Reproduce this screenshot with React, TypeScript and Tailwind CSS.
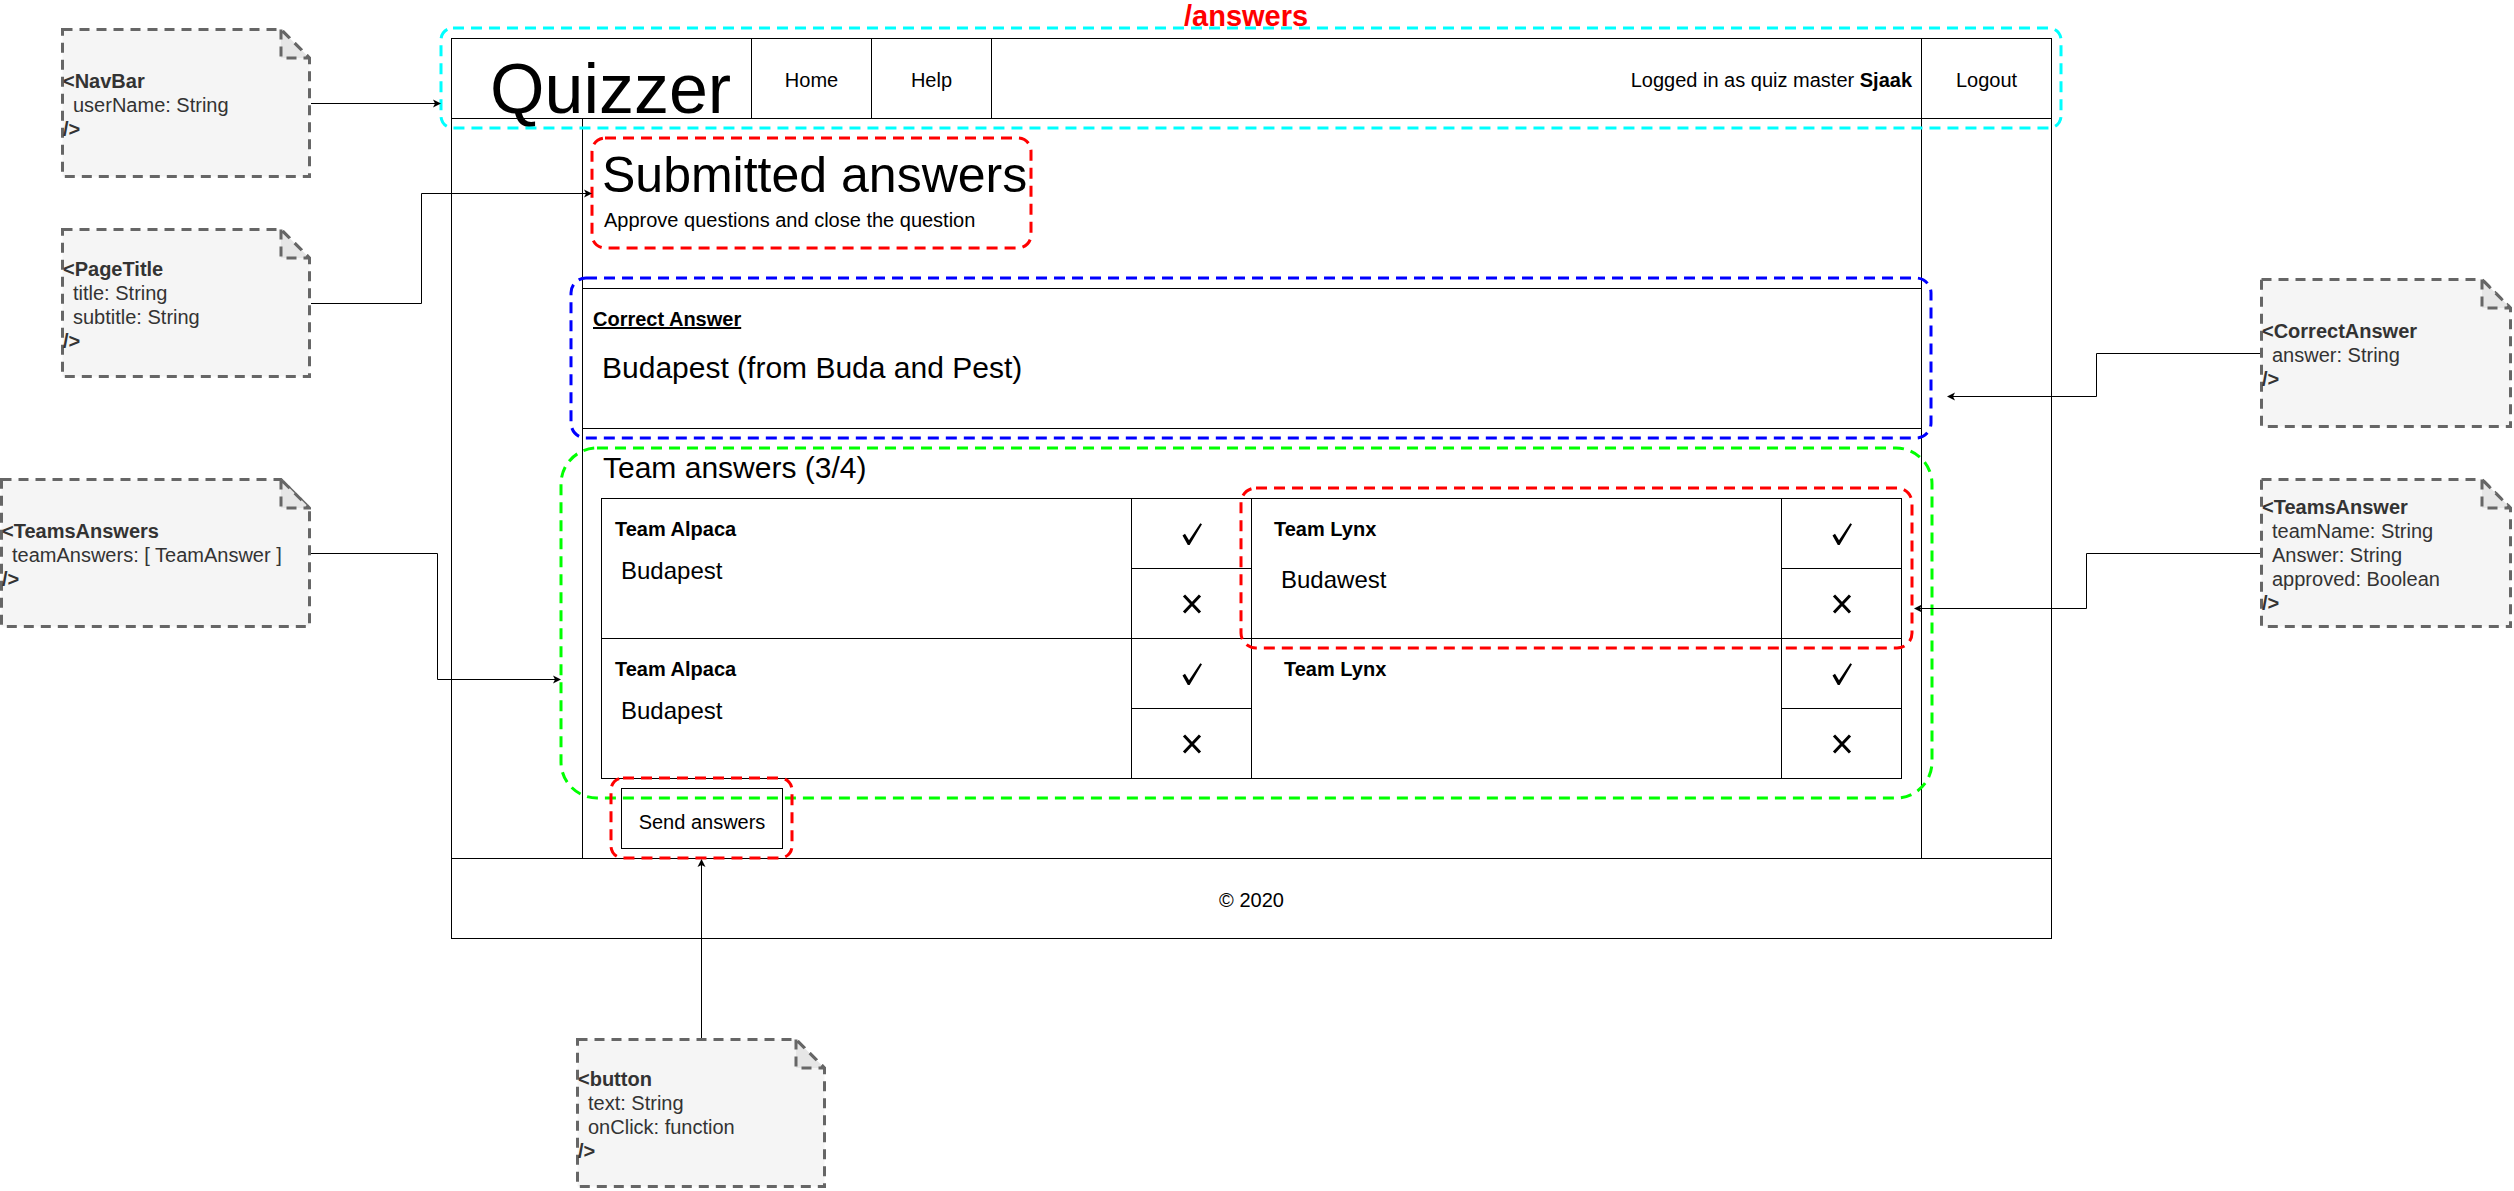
import React from "react";

type Line = { t: string; b?: boolean };

function Note({ pos, w, lines }: { pos: string; w: number; lines: Line[] }) {
  const h = 150;
  return (
    <div className={`absolute ${pos} h-[150px] flex flex-col justify-center pt-[3px]`}>
      <svg className="absolute inset-0" width={w} height={h}>
        <polygon
          points={`1.5,1.5 ${w - 30},1.5 ${w - 1.5},30 ${w - 1.5},${h - 1.5} 1.5,${h - 1.5}`}
          fill="#f5f5f5"
          stroke="#666666"
          strokeWidth={3}
          strokeDasharray="10 7"
        />
        <path
          d={`M${w - 30} 1.5 L${w - 30} 30 L${w - 1.5} 30 Z`}
          fill="#e6e6e6"
          stroke="#666666"
          strokeWidth={3}
          strokeDasharray="10 7"
        />
      </svg>
      <div className="relative flex flex-col text-[20px] leading-[24px] text-[#333333]">
        {lines.map((l, i) => (
          <div key={i} className={l.b ? "pl-[2px] font-bold" : "pl-[12px]"}>
            {l.t}
          </div>
        ))}
      </div>
    </div>
  );
}

function Check() {
  return (
    <svg width="20" height="22" viewBox="0 0 20 22">
      <path d="M0.5 12.5 L3 10.8 L7 17.3 L18.3 0.3 L20 1.3 L7.6 22 L5.8 22 Z" fill="#000" />
    </svg>
  );
}

function Cross() {
  return (
    <svg width="20" height="20" viewBox="0 0 20 20">
      <path d="M2 1.5 L18 18.5 M18 1.5 L2 18.5" stroke="#000" strokeWidth={3} />
    </svg>
  );
}

function Votes({ cls }: { cls: string }) {
  return (
    <div className={`flex flex-col ${cls}`}>
      <div className="h-[70px] shrink-0 border-b border-black flex items-center justify-center">
        <Check />
      </div>
      <div className="flex-1 flex items-center justify-center">
        <Cross />
      </div>
    </div>
  );
}

function head(tx: number, ty: number, d: "r" | "l" | "u") {
  if (d === "r") return `${tx},${ty} ${tx - 8},${ty - 4} ${tx - 6},${ty} ${tx - 8},${ty + 4}`;
  if (d === "l") return `${tx},${ty} ${tx + 8},${ty - 4} ${tx + 6},${ty} ${tx + 8},${ty + 4}`;
  return `${tx},${ty} ${tx - 4},${ty + 8} ${tx},${ty + 6} ${tx + 4},${ty + 8}`;
}

export default function App() {
  return (
    <div className="relative w-[2514px] h-[1191px] overflow-hidden bg-white text-black font-['Liberation_Sans',Arial,Helvetica,sans-serif]">
      {/* Wireframe */}
      <div className="absolute left-[451px] top-[38px] w-[1601px] h-[901px] border border-black flex flex-col">
        {/* navbar */}
        <div className="h-[80px] shrink-0 border-b border-black flex">
          <div className="w-[300px] shrink-0 border-r border-black pl-[38px] pt-[15px] text-[70px] leading-[70px]">
            Quizzer
          </div>
          <div className="w-[120px] shrink-0 border-r border-black flex items-center justify-center pt-[3px] text-[20px]">
            Home
          </div>
          <div className="w-[120px] shrink-0 border-r border-black flex items-center justify-center pt-[3px] text-[20px]">
            Help
          </div>
          <div className="w-[930px] shrink-0 border-r border-black flex items-center justify-end pr-[9px] pt-[3px] text-[20px] whitespace-pre">
            Logged in as quiz master <span className="font-bold">Sjaak</span>
          </div>
          <div className="flex-1 flex items-center justify-center pt-[3px] text-[20px]">Logout</div>
        </div>

        {/* body */}
        <div className="h-[739px] shrink-0 flex">
          <div className="w-[131px] shrink-0 border-r border-black" />
          <div className="w-[1339px] shrink-0 border-r border-black flex flex-col">
            <div className="pl-[19px] pt-[31px] text-[50px] leading-[50px]">Submitted answers</div>
            <div className="pl-[21px] mt-[10px] text-[20px] leading-[20px]">
              Approve questions and close the question
            </div>

            <div className="mt-[58px] h-[141px] shrink-0 border-y border-black flex flex-col">
              <div className="pl-[10px] pt-[20px] text-[20px] leading-[20px] font-bold underline">
                Correct Answer
              </div>
              <div className="pl-[19px] mt-[24px] text-[30px] leading-[30px]">
                Budapest (from Buda and Pest)
              </div>
            </div>

            <div className="pl-[20px] mt-[24px] text-[30px] leading-[30px]">Team answers (3/4)</div>

            <div className="ml-[18px] mt-[15px] w-[1301px] h-[281px] shrink-0 border border-black grid grid-cols-[530px_120px_530px_119px] grid-rows-[140px_139px]">
              {/* row 1 */}
              <div className="border-r border-b border-black flex flex-col">
                <div className="pl-[13px] pt-[20px] text-[20px] leading-[20px] font-bold">Team Alpaca</div>
                <div className="pl-[19px] mt-[20px] text-[24px] leading-[24px]">Budapest</div>
              </div>
              <Votes cls="border-r border-b border-black" />
              <div className="border-r border-b border-black flex flex-col">
                <div className="pl-[22px] pt-[20px] text-[20px] leading-[20px] font-bold">Team Lynx</div>
                <div className="pl-[29px] mt-[29px] text-[24px] leading-[24px]">Budawest</div>
              </div>
              <Votes cls="border-b border-black" />
              {/* row 2 */}
              <div className="border-r border-black flex flex-col">
                <div className="pl-[13px] pt-[20px] text-[20px] leading-[20px] font-bold">Team Alpaca</div>
                <div className="pl-[19px] mt-[20px] text-[24px] leading-[24px]">Budapest</div>
              </div>
              <Votes cls="border-r border-black" />
              <div className="border-r border-black flex flex-col">
                <div className="pl-[32px] pt-[20px] text-[20px] leading-[20px] font-bold">Team Lynx</div>
              </div>
              <Votes cls="" />
            </div>

            <div className="ml-[38px] mt-[9px] w-[162px] h-[61px] shrink-0 border border-black flex items-center justify-center pt-[6px] text-[20px]">
              Send answers
            </div>
          </div>
          <div className="flex-1" />
        </div>

        {/* footer */}
        <div className="flex-1 border-t border-black flex items-center justify-center pt-[2px] text-[20px]">
          © 2020
        </div>
      </div>

      {/* Annotation overlay: dashed groups and connectors */}
      <svg className="absolute inset-0 pointer-events-none" width={2514} height={1191}>
        <g fill="none" strokeWidth={3} strokeDasharray="11 7">
          <rect x={441} y={28} width={1620} height={100} rx={12} stroke="#00ffff" />
          <rect x={592} y={138} width={439} height={110} rx={13} stroke="#ff0000" />
          <rect x={571} y={278} width={1360} height={160} rx={15} stroke="#0000ff" />
          <rect x={561} y={448} width={1371} height={350} rx={36} stroke="#00ff00" />
          <rect x={1241} y={488} width={671} height={160} rx={15} stroke="#ff0000" />
          <rect x={611} y={778} width={181} height={80} rx={12} stroke="#ff0000" />
        </g>
        <g fill="none" stroke="#000" strokeWidth={1}>
          <path d="M311 103.5 H435" />
          <path d="M311 303.5 H421.5 V193.5 H586" />
          <path d="M311 553.5 H437.5 V679.5 H555" />
          <path d="M2260 353.5 H2096.5 V396.5 H1953" />
          <path d="M2260 553.5 H2086.5 V608.5 H1920" />
          <path d="M701.5 1038 V865" />
        </g>
        <g fill="#000">
          <polygon points={head(441, 103.5, "r")} />
          <polygon points={head(592, 193.5, "r")} />
          <polygon points={head(561, 679.5, "r")} />
          <polygon points={head(1947, 396.5, "l")} />
          <polygon points={head(1914, 608.5, "l")} />
          <polygon points={head(701.5, 859, "u")} />
        </g>
      </svg>

      {/* Component notes */}
      <Note
        pos="left-[61px] top-[28px] w-[250px]"
        w={250}
        lines={[{ t: "<NavBar", b: true }, { t: "userName: String" }, { t: "/>", b: true }]}
      />
      <Note
        pos="left-[61px] top-[228px] w-[250px]"
        w={250}
        lines={[
          { t: "<PageTitle", b: true },
          { t: "title: String" },
          { t: "subtitle: String" },
          { t: "/>", b: true },
        ]}
      />
      <Note
        pos="left-[0px] top-[478px] w-[311px]"
        w={311}
        lines={[{ t: "<TeamsAnswers", b: true }, { t: "teamAnswers: [ TeamAnswer ]" }, { t: "/>", b: true }]}
      />
      <Note
        pos="left-[2260px] top-[278px] w-[252px]"
        w={252}
        lines={[{ t: "<CorrectAnswer", b: true }, { t: "answer: String" }, { t: "/>", b: true }]}
      />
      <Note
        pos="left-[2260px] top-[478px] w-[252px]"
        w={252}
        lines={[
          { t: "<TeamsAnswer", b: true },
          { t: "teamName: String" },
          { t: "Answer: String" },
          { t: "approved: Boolean" },
          { t: "/>", b: true },
        ]}
      />
      <Note
        pos="left-[576px] top-[1038px] w-[250px]"
        w={250}
        lines={[
          { t: "<button", b: true },
          { t: "text: String" },
          { t: "onClick: function" },
          { t: "/>", b: true },
        ]}
      />

      {/* Route label */}
      <div className="absolute left-[1184px] top-[2px] text-[29px] leading-[29px] font-bold text-[#ff0000]">
        /answers
      </div>
    </div>
  );
}
